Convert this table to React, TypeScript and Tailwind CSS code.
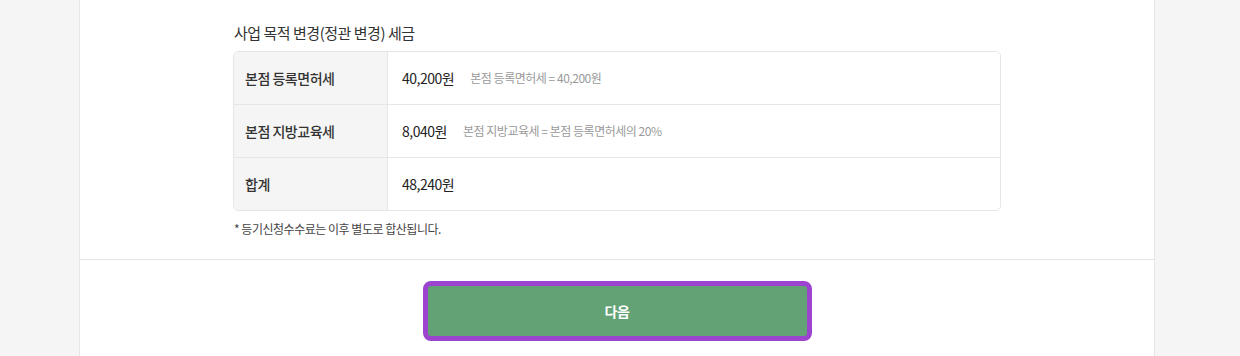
import React from 'react';

type TaxRow = {
  label: string;
  amount: string;
  hint?: string;
};

const rows: TaxRow[] = [
  { label: '본점 등록면허세', amount: '40,200원', hint: '본점 등록면허세 = 40,200원' },
  { label: '본점 지방교육세', amount: '8,040원', hint: '본점 지방교육세 = 본점 등록면허세의 20%' },
  { label: '합계', amount: '48,240원' },
];

export default function App() {
  return (
    <div
      className="min-h-[356px] bg-[#f5f5f5] text-[#333] tracking-[-0.03em]"
      style={{ fontFamily: '"Noto Sans CJK KR", "Noto Sans", sans-serif' }}
    >
      <div className="ml-[79px] w-[1076px] min-h-[356px] bg-white border-x border-[#e6e6e6]">
        <section className="mx-auto w-[768px] pt-[22px] pb-[21px]">
          <h2 className="text-[15px] leading-[22px] text-[#333] pl-px">사업 목적 변경(정관 변경) 세금</h2>

          <div className="mt-[7px] border border-[#e6e6e6] rounded-[5px] overflow-hidden divide-y divide-[#e6e6e6]">
            {rows.map((r) => (
              <div key={r.label} className="flex h-[52px] box-content">
                <div className="w-[154px] shrink-0 flex items-center pl-[11px] bg-[#f5f5f5] border-r border-[#e6e6e6] text-[14px] font-medium text-[#333]">
                  {r.label}
                </div>
                <div className="flex items-center pl-[14px]">
                  <span className="text-[14px] text-[#222]">{r.amount}</span>
                  {r.hint && (
                    <span className="ml-4 text-[12px] text-[#9a9a9a]">{r.hint}</span>
                  )}
                </div>
              </div>
            ))}
          </div>

          <p className="mt-[9px] text-[12px] leading-[18px] text-[#444] pl-px">
            * 등기신청수수료는 이후 별도로 합산됩니다.
          </p>
        </section>

        <div className="border-t border-[#e6e6e6] pt-[21px] flex justify-center">
          <button className="w-[389px] h-[60px] rounded-[8px] border-[5px] border-[#9c44d0] bg-[#62a274] text-white text-[14px] font-bold">
            다음
          </button>
        </div>
      </div>
    </div>
  );
}
